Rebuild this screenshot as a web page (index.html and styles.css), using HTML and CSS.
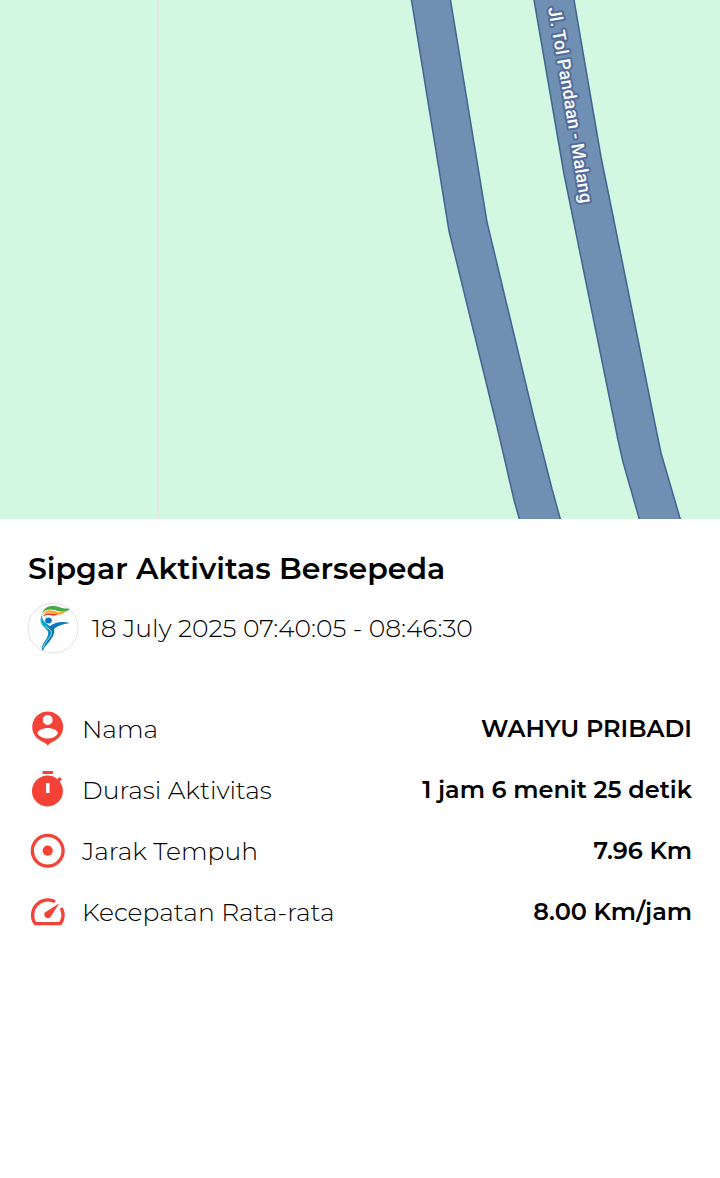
FILE: index.html
```
<!DOCTYPE html>
<html lang="id">
<head>
    <meta charset="UTF-8">
    <meta name="viewport" content="width=device-width, initial-scale=1.0">
    <title>Sipgar Aktivitas Bersepeda</title>
    <link rel="stylesheet" href="styles.css">
</head>
<body>
    <svg class="map" viewBox="0 0 720 519" preserveAspectRatio="xMidYMid slice" role="img" aria-label="Peta Jl. Tol Pandaan - Malang">
        <rect class="map-land" width="720" height="519"/>
        <path class="map-border" d="M158 0V519"/>
        <path class="map-road" d="M411 -3L449 231L499 435L514 500L521 525H562L552 489L534 418L487 222L450 -3Z"/>
        <path class="map-road" d="M533.500 -3L564 174L618 440L623 462L641 525H682L661 453L655 424L613 216L601 157L573.500 -3Z"/>
        <path id="road-name" d="M548 8L564 100L584 226" fill="none"/>
        <text class="map-label"><textPath href="#road-name">Jl. Tol Pandaan - Malang</textPath></text>
    </svg>

    <main class="activity">
        <h1 class="title">Sipgar Aktivitas Bersepeda</h1>
        <div class="date">
            <svg class="logo" viewBox="0 0 52 52" aria-hidden="true">
                <defs>
                    <linearGradient id="body-color" x1="0" y1="0" x2="1" y2="1">
                        <stop offset="0" stop-color="#08bfd0"/>
                        <stop offset="1" stop-color="#0868b0"/>
                    </linearGradient>
                </defs>
                <circle cx="26" cy="26" r="25" fill="#fff" stroke="#e2e2e2"/>
                <path fill="#43a848" d="M15 11C18 3 27 3 32 5C36 7 40 6 43 7C38 11 33 10 28 8C23 7 18 7 15 11Z"/>
                <path fill="#f6aa26" d="M15 13C18 7 24 8 28 9C32 11 35 10 39 9C35 14 30 13 25 11C21 10 18 10 15 13Z"/>
                <path fill="#e43c35" d="M15 15C18 10 23 11 27 12L31 12C28 15 24 13 21 13C18 13 16 14 15 15Z"/>
                <path fill="url(#body-color)" d="M15 13C12 18 14 22 17 25C20 28 22 29 21 33C20 38 14 41 15 49C19 42 28 36 27 28C26 25 20 23 18 20C16 18 15 16 15 13Z"/>
                <path fill="#0878b8" d="M22 25C27 20 35 19 43 21C36 22 30 24 27 27C29 35 19 39 16 49C16 40 25 36 25 29Z"/>
                <path fill="none" stroke="#cdeef5" stroke-width=".8" d="M18 24C22 27 26 29 24 33C22 37 18 40 16 46"/>
                <ellipse cx="21.500" cy="18.500" rx="3.300" ry="3" fill="#0874b8"/>
            </svg>
            <span>18 July 2025 07:40:05 - 08:46:30</span>
        </div>

        <dl class="details">
            <div class="row">
                <svg class="icon" viewBox="0 0 36 36" aria-hidden="true">
                    <path fill-rule="evenodd" d="M17.700 .5A15.500 15.500 0 0 0 11.500 30.200Q15.500 31.500 17.700 34.500Q19.900 31.500 23.900 30.200A15.500 15.500 0 0 0 17.700 .5ZM17.700 4A5 5 0 1 1 17.700 14A5 5 0 1 1 17.700 4ZM17.700 17C22.500 17 27.900 19.300 27.900 22.500C26 25.700 22 27.500 17.700 27.500S9.400 25.700 7.500 22.500C7.500 19.300 12.900 17 17.700 17Z"/>
                </svg>
                <dt>Nama</dt>
                <dd>WAHYU PRIBADI</dd>
            </div>
            <div class="row">
                <svg class="icon" viewBox="0 1 36 36" aria-hidden="true">
                    <path d="M12.500 0H23V3H12.500Z"/>
                    <path fill-rule="evenodd" d="M17.700 4.500A15.500 15.500 0 0 1 27.300 7.900L29.700 6L31.900 8.300L29.700 10.500A15.500 15.500 0 1 1 17.700 4.500ZM16 12V22H19.500V12Z"/>
                </svg>
                <dt>Durasi Aktivitas</dt>
                <dd>1 jam 6 menit 25 detik</dd>
            </div>
            <div class="row">
                <svg class="icon" viewBox="0 0 36 36" aria-hidden="true">
                    <circle class="ring" cx="17.700" cy="17.700" r="15.400"/>
                    <circle cx="17.700" cy="17.700" r="5.100"/>
                </svg>
                <dt>Jarak Tempuh</dt>
                <dd>7.96 Km</dd>
            </div>
            <div class="row">
                <svg class="icon" viewBox="0 0 36 36" aria-hidden="true">
                    <path class="ring" d="M25 7.600A15.300 15.300 0 0 0 5.200 29.700H30.200A15.300 15.300 0 0 0 31.200 13.900"/>
                    <path d="M29.300 9.200L20.500 23A3.500 3.500 0 1 1 15.300 18.300Z"/>
                </svg>
                <dt>Kecepatan Rata-rata</dt>
                <dd>8.00 Km/jam</dd>
            </div>
        </dl>
    </main>
</body>
</html>
```
FILE: styles.css
```
body {
    margin: 0;
    background-color: #fff;
    color: #000;
    font-family: Montserrat, Inter, sans-serif;
    font-size: 25px;
    font-weight: 300;
}
.map {
    display: block;
    width: 100%;
    aspect-ratio: 720 / 519;
    overflow: hidden;
}
.map-land {
    fill: #d2f8e1;
}
.map-border {
    stroke: #e8e4e2;
    stroke-width: 2;
}
.map-road {
    fill: #6f90b2;
    stroke: #41658f;
    stroke-width: 1.5px;
}
.map-label {
    font-family: Roboto, sans-serif;
    font-size: 18px;
    font-weight: 500;
    fill: #fff;
    stroke: #536c9b;
    stroke-width: 4px;
    stroke-linejoin: round;
    paint-order: stroke;
}
.activity {
    padding: 30px 28px;
}
.title {
    margin: 0;
    font-size: 30px;
    line-height: 40px;
    font-weight: 600;
}
.date {
    display: flex;
    align-items: center;
    gap: 13px;
    margin-top: 13px;
}
.logo {
    flex: none;
    width: 52px;
    height: 52px;
    margin-left: -1px;
}
.details {
    display: flex;
    flex-direction: column;
    gap: 25px;
    margin: 57px 0 0;
}
.row {
    display: flex;
    align-items: center;
    line-height: 36px;
}
.icon {
    flex: none;
    width: 36px;
    height: 36px;
    margin: 0 16px 0 2px;
    fill: #f44336;
    overflow: visible;
}
.ring {
    fill: none;
    stroke: #f44336;
    stroke-width: 3.3px;
    stroke-linejoin: round;
}
dd {
    margin: 0 0 0 auto;
    text-align: right;
    font-size: 24px;
    font-weight: 600;
}
```
